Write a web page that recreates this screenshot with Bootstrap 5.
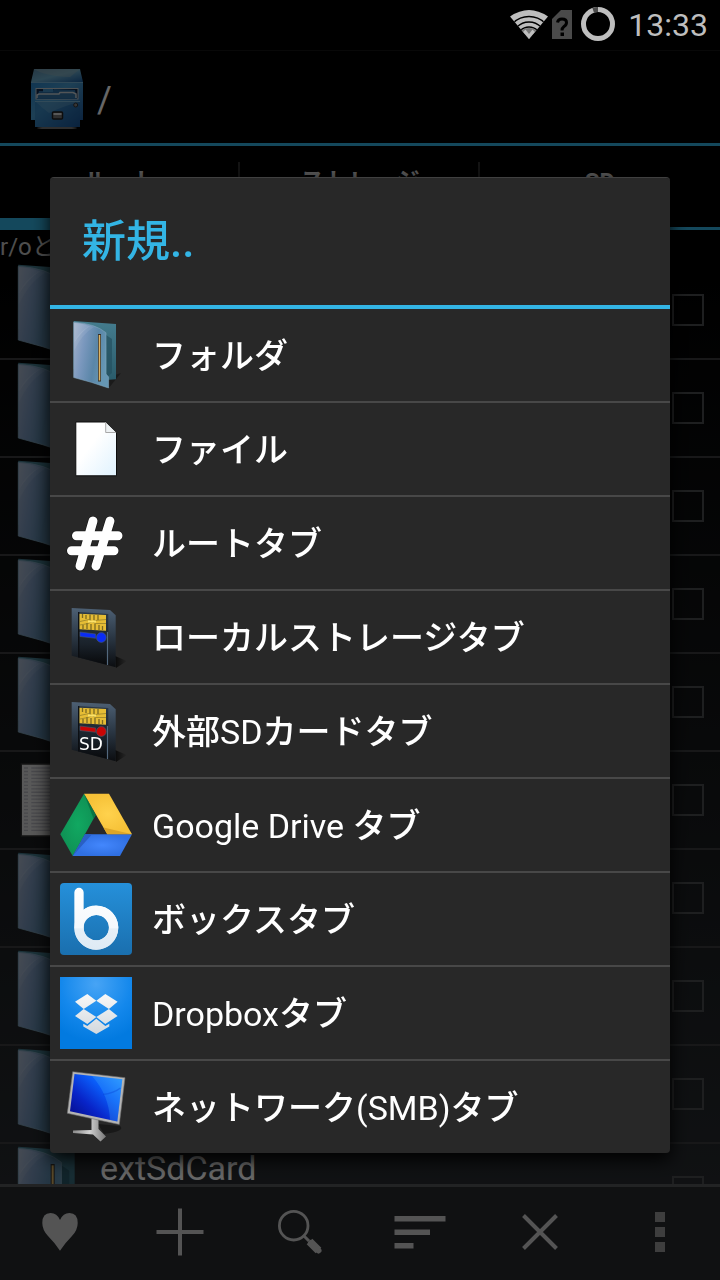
<!DOCTYPE html>
<html lang="ja">
<head>
  <meta charset="UTF-8" />
  <meta name="viewport" content="width=device-width, initial-scale=1.0"/>
  <title>File Manager</title>
  <link rel="stylesheet" href="https://cdn.jsdelivr.net/npm/bootstrap@5.3.0/dist/css/bootstrap.min.css"/>
  <style>
    body {
      font-family: Roboto, "Noto Sans CJK JP", sans-serif;
      background-color: #000;
      color: #fff;
    }
    .screen {
      background: linear-gradient(#000 0, #000 240px, #282c30 1180px);
    }
    .status-bar {
      z-index: 1060;
      height: 50px;
      padding-right: 12px;
      font-size: 32px;
      line-height: 48px;
      color: #bebebe;
    }
    .path-bar {
      height: 96px;
      padding-left: 25px;
      border-top: 1px solid #141414;
      border-bottom: 3px solid #33b5e5;
      font-size: 36px;
    }
    .path-bar span {
      padding-top: 6px;
    }
    .tab-strip {
      border-bottom: 3px solid #33b5e5;
    }
    .tab-strip a {
      height: 81px;
      line-height: 72px;
      font-size: 24px;
      font-weight: 700;
      color: #ddd;
      text-decoration: none;
      border-bottom: 9px solid transparent;
    }
    .tab-strip a.active {
      border-bottom-color: #33b5e5;
    }
    .tab-strip a:not(:last-child) {
      background: linear-gradient(#303030, #303030) right 16px / 2px 52px no-repeat;
    }
    .mount-info {
      height: 32px;
      line-height: 34px;
      font-size: 24px;
      color: #c4c4c4;
    }
    .file-row {
      height: 98px;
      border-bottom: 2px solid #3c3e40;
      padding-right: 16px;
    }
    .file-name {
      font-size: 34px;
      line-height: 48px;
    }
    .file-row .form-check-input {
      width: 32px;
      height: 32px;
      border: 2px solid #4c4e50;
      border-radius: 0;
      background-color: transparent;
    }
    .tool-bar {
      border-top: 3px solid #55585a;
      background-color: #282b2e;
    }
    .tool-bar button {
      height: 93px;
      color: #d2d2d2;
      border-radius: 0;
    }
    .tool-bar svg {
      display: block;
      margin: 0 auto 4px;
    }
    .modal-backdrop {
      --bs-backdrop-opacity: 0.6;
    }
    .new-dialog {
      padding-top: 50px;
    }
    .new-dialog .modal-dialog {
      max-width: none;
      min-height: 100%;
      margin: 0 50px;
    }
    .new-dialog .modal-content {
      background-color: #282828;
      color: #fff;
      border: 0;
      border-top: 1px solid #404040;
      border-radius: 4px;
      box-shadow: 0 6px 18px #000;
      overflow: hidden;
    }
    .new-dialog .modal-header {
      height: 131px;
      padding: 0 32px;
      border-bottom: 4px solid #33b5e5;
      border-radius: 0;
    }
    .new-dialog .modal-title {
      font-size: 44px;
      font-weight: 500;
      color: #33b5e5;
    }
    .new-dialog .list-group-item {
      height: 94px;
      padding: 2px 10px 0;
      gap: 20px;
      font-size: 34px;
      font-weight: 500;
      background-color: transparent;
      color: #fff;
      border-color: #484848;
      border-width: 0 0 2px;
    }
    .new-dialog .list-group-item svg {
      margin-bottom: 2px;
    }
    .new-dialog .list-group-item:last-child {
      height: 92px;
      border-bottom: 0;
    }
  </style>
</head>
<body>
  <!-- Shared icons -->
  <svg width="0" height="0" class="position-absolute" aria-hidden="true">
    <defs>
      <linearGradient id="folderFront" x1="0" y1="0" x2="1" y2="0.3">
        <stop offset="0" stop-color="#a3b2cb"/>
        <stop offset="0.35" stop-color="#7b98be"/>
        <stop offset="0.7" stop-color="#5a86a8"/>
        <stop offset="1" stop-color="#6697b4"/>
      </linearGradient>
      <linearGradient id="folderBack" x1="0" y1="0" x2="0" y2="1">
        <stop offset="0" stop-color="#447c8e"/>
        <stop offset="1" stop-color="#2a5c6b"/>
      </linearGradient>
      <linearGradient id="paper" x1="0" y1="0" x2="1" y2="1">
        <stop offset="0.4" stop-color="#fff"/>
        <stop offset="1" stop-color="#dff2fe"/>
      </linearGradient>
      <linearGradient id="cardBody" x1="0" y1="0" x2="0" y2="1">
        <stop offset="0" stop-color="#4d6074"/>
        <stop offset="0.5" stop-color="#2a3643"/>
        <stop offset="1" stop-color="#0b0d10"/>
      </linearGradient>
      <linearGradient id="cardPanel" x1="0" y1="0" x2="0" y2="1">
        <stop offset="0" stop-color="#2c3947"/>
        <stop offset="0.6" stop-color="#1a222b"/>
        <stop offset="1" stop-color="#08090b"/>
      </linearGradient>
      <linearGradient id="floorShade" x1="0" y1="0" x2="1" y2="0">
        <stop offset="0" stop-color="#000" stop-opacity="0.8"/>
        <stop offset="1" stop-color="#000" stop-opacity="0"/>
      </linearGradient>
      <linearGradient id="boxBlue" x1="0" y1="0" x2="0" y2="1">
        <stop offset="0" stop-color="#2590da"/>
        <stop offset="1" stop-color="#1a6fae"/>
      </linearGradient>
      <linearGradient id="boxLetter" gradientUnits="userSpaceOnUse" x1="0" y1="5" x2="0" y2="67">
        <stop offset="0" stop-color="#fff"/>
        <stop offset="0.64" stop-color="#f4f8fc"/>
        <stop offset="0.66" stop-color="#e6eff7"/>
        <stop offset="1" stop-color="#deeaf4"/>
      </linearGradient>
      <radialGradient id="dropBlue" cx="0.5" cy="0.1" r="0.8">
        <stop offset="0" stop-color="#47a4f5"/>
        <stop offset="0.6" stop-color="#1488ec"/>
        <stop offset="1" stop-color="#027ae0"/>
      </radialGradient>
      <linearGradient id="dropWhite" gradientUnits="userSpaceOnUse" x1="0" y1="17" x2="0" y2="57">
        <stop offset="0" stop-color="#f8f8f8"/>
        <stop offset="1" stop-color="#d2d8de"/>
      </linearGradient>
      <linearGradient id="screenBlue" x1="0" y1="1" x2="1" y2="0">
        <stop offset="0" stop-color="#05087e"/>
        <stop offset="0.35" stop-color="#0824c8"/>
        <stop offset="0.65" stop-color="#0a5cf8"/>
        <stop offset="1" stop-color="#2f9cff"/>
      </linearGradient>
      <linearGradient id="metal" x1="0" y1="0" x2="1" y2="0">
        <stop offset="0" stop-color="#8a8a8a"/>
        <stop offset="0.5" stop-color="#d0d0d0"/>
        <stop offset="1" stop-color="#777"/>
      </linearGradient>
      <radialGradient id="driveYellow"><stop offset="0" stop-color="#ffd24d"/><stop offset="1" stop-color="#f6c137"/></radialGradient>
      <radialGradient id="driveGreen"><stop offset="0" stop-color="#11a861"/><stop offset="1" stop-color="#0f9255"/></radialGradient>
      <radialGradient id="driveBlue"><stop offset="0" stop-color="#4387fd"/><stop offset="1" stop-color="#3070e2"/></radialGradient>
      <linearGradient id="cabinetTop" x1="0" y1="0" x2="1" y2="1">
        <stop offset="0" stop-color="#5d8aa8"/>
        <stop offset="0.5" stop-color="#6fb0cf"/>
        <stop offset="1" stop-color="#1a5fa5"/>
      </linearGradient>
      <linearGradient id="cabinetFront" x1="0" y1="0" x2="1" y2="1">
        <stop offset="0" stop-color="#2a86cc"/>
        <stop offset="0.4" stop-color="#4a9fd4"/>
        <stop offset="1" stop-color="#1a5298"/>
      </linearGradient>
      <clipPath id="wifiFan"><path d="M19 29 0 6.500Q19-6.500 38 6.500Z"/></clipPath>
      <symbol id="icon-folder" viewBox="0 0 72 72">
        <path d="M46 59 61 54 48 70Z" fill="#000" opacity="0.35"/>
        <path d="M13.700 2 56 5V60.300L46 61 13.700 50Z" fill="url(#folderBack)"/>
        <path d="M46 16 52 20V54L47 58Z" fill="#235060" opacity="0.7"/>
        <path d="M13.700 3.200Q35 4.500 46 13.700V55L48.600 58V69Q32 63 13.700 58.500Z" fill="url(#folderFront)" stroke="#7fa4bb" stroke-width="0.600"/>
        <path d="M14 24V4Q23 4.500 30 7Q21 13 14 24Z" fill="#fff" opacity="0.12"/>
        <path d="M14 32Q22 15 34 8L30 6.500Q18 13 14 24Z" fill="#fff" opacity="0.08"/>
        <path d="M39.500 15V62.500" stroke="#33302c" stroke-width="3"/>
        <path d="M39.500 16V61.500" stroke="#dcb465" stroke-width="1.500"/>
      </symbol>
      <symbol id="icon-file" viewBox="0 0 72 72">
        <path d="M15.800 9H45.700L56.500 19.700V62.800H15.800Z" fill="url(#paper)" stroke="#0c0c0c" stroke-width="1"/>
        <path d="M45.700 9.500V19.500H56" fill="#eef2f4" stroke="#a8a8a8" stroke-width="1"/>
      </symbol>
      <symbol id="icon-text" viewBox="0 0 72 72">
        <path d="M16 9H56V63H16Z" fill="#dcdcdc" stroke="#333" stroke-width="1"/>
        <path d="M19.500 11.500V61" stroke="#b4b4bc" stroke-width="3" stroke-dasharray="1 1.600"/>
        <path d="M38 11.500V61" stroke="#b4b4bc" stroke-width="29" stroke-dasharray="1 1.600"/>
      </symbol>
      <symbol id="icon-card" viewBox="0 0 72 72">
        <path d="M55 55 67 60 56 67Z" fill="url(#floorShade)"/>
        <path d="M11.700 7 50 9 55.700 14.300V66.300L11.700 54.700Z" fill="url(#cardBody)"/>
        <path d="M18.700 11 48.300 13V64L18.700 56.500Z" fill="url(#cardPanel)"/>
        <path d="M18.700 11V56.500" stroke="#0a0d10" stroke-width="1.200"/>
        <path d="M47.500 31V64" stroke="#53687d" stroke-width="1.200"/>
        <path d="M19.500 12.700 46 14V29.700L19.500 28.300Z" fill="#e6bd35"/>
        <path d="M22.500 13V17M26 14V18M30 13.500V19M34 14V19M38 14V19M23 24V28M27 22V28M31 23V29M35 23V29M39 24V29M42.500 25V29" stroke="#7c6a22" stroke-width="1.300"/>
        <path d="M20 20.500 29 18.500 35 22.500H46M20 24 28 22.500 35 19.500 46 18.500" fill="none" stroke="#8b7828" stroke-width="0.700"/>
        <path d="M28 20.500H36" stroke="#fbe26a" stroke-width="2"/>
      </symbol>
    </defs>
  </svg>

  <div class="screen vh-100 d-flex flex-column overflow-hidden">
    <div class="status-bar bg-black position-relative d-flex align-items-center justify-content-end flex-shrink-0">
      <svg width="38" height="30" viewBox="0 0 38 30" class="me-1" aria-hidden="true">
        <g clip-path="url(#wifiFan)">
          <rect width="38" height="30" fill="#bebebe"/>
          <circle cx="19" cy="29" r="11" fill="#777"/>
          <g fill="none" stroke="#000" stroke-width="1.300">
            <circle cx="19" cy="29" r="22.500"/>
            <circle cx="19" cy="29" r="17"/>
            <circle cx="19" cy="29" r="12"/>
          </g>
          <path d="M13 22 19 29 25 22 22.500 19.500 19 24 15.500 19.500Z" fill="#bebebe"/>
        </g>
      </svg>
      <svg width="20" height="30" viewBox="0 0 20 30" aria-hidden="true">
        <path d="M9 0H20V29H0V9Z" fill="#4a4a4a"/>
        <path d="M5.500 12.500Q6 9 10 9Q14.500 9 14.500 12.500Q14.500 15 12 16.500Q10 18 10 20.500" fill="none" stroke="#000" stroke-width="3"/>
        <rect x="8.500" y="22.500" width="3.500" height="3.500" fill="#000"/>
      </svg>
      <svg width="36" height="36" viewBox="0 0 36 36" class="ms-2" aria-hidden="true">
        <circle cx="18" cy="17" r="14.500" fill="none" stroke="#bebebe" stroke-width="5"/>
        <path d="M13.200 3.300A14.500 14.500 0 0 1 18 2.500" fill="none" stroke="#4a4a4a" stroke-width="5"/>
      </svg>
      <span class="ms-2 ps-1">13:33</span>
    </div>

    <header class="path-bar d-flex align-items-center gap-2 flex-shrink-0">
      <svg width="64" height="64" viewBox="0 0 64 64" aria-hidden="true">
        <ellipse cx="32" cy="63" rx="20" ry="1.500" fill="#777"/>
        <path d="M6 17H58V55H55V62H10V55H6Z" fill="url(#cabinetFront)"/>
        <path d="M9 4H55L58 17H6Z" fill="url(#cabinetTop)"/>
        <path d="M9 4H55L45 12Q20 11 9 4Z" fill="#9ab5bd" opacity="0.45"/>
        <path d="M6 17.500H58" stroke="#75b5da"/>
        <rect x="11" y="23.500" width="42" height="10.500" fill="#10294d" stroke="#c4ccd2"/>
        <path d="M12 34 14 26H27L29 24 50 25 52 34Z" fill="#2b6fa6"/>
        <path d="M12 33V30L14 29H34L35 27.500H48L51 29V33" fill="#3575a8" stroke="#ccd5da" stroke-width="1.500"/>
        <path d="M18 24H28V27H18Z" fill="#4292c9"/>
        <path d="M10 36H55V62H10Z" fill="#15599d" opacity="0.25"/>
        <path d="M10 36.500H55" stroke="#7bb8dc"/>
        <path d="M11 37H54Q36 42 24 48Q16 42 11 37Z" fill="#88c1dc" opacity="0.3"/>
        <circle cx="50.700" cy="40" r="2" fill="#888" stroke="#333"/>
        <rect x="27.500" y="47" width="10" height="7" rx="1" fill="#777" stroke="#222" stroke-width="1.500"/>
        <path d="M28.500 49H36.500" stroke="#ddd" stroke-width="2"/>
      </svg>
      <span>/</span>
    </header>

    <nav class="tab-strip d-flex flex-shrink-0 text-center">
      <a href="#" class="active col-4">ルート</a>
      <a href="#" class="col-4">ストレージ</a>
      <a href="#" class="col-4">SD</a>
    </nav>

    <div class="mount-info flex-shrink-0">r/oと</div>

    <main class="flex-grow-1 overflow-hidden" id="fileList"></main>

    <footer class="tool-bar d-flex flex-shrink-0">
      <button type="button" class="btn col-2 p-0" aria-label="Favorites">
        <svg width="60" height="60" viewBox="0 0 60 60" fill="currentColor">
          <path d="M30 48.700Q25 41 18 34Q12.300 28 12.300 21Q12.300 11 20.500 11Q27 11 30 18Q33 11 39.500 11Q47.700 11 47.700 21Q47.700 28 42 34Q35 41 30 48.700Z"/>
        </svg>
      </button>
      <button type="button" class="btn col-2 p-0" aria-label="New">
        <svg width="60" height="60" viewBox="0 0 60 60" stroke="currentColor" stroke-width="4">
          <path d="M30 6.500V53.500M6.500 30H53.500"/>
        </svg>
      </button>
      <button type="button" class="btn col-2 p-0" aria-label="Search">
        <svg width="60" height="60" viewBox="0 0 60 60" fill="none" stroke="currentColor">
          <circle cx="23.700" cy="23.700" r="14.300" stroke-width="2.800"/>
          <path d="M33.500 33.500 39 39" stroke-width="3"/>
          <path d="M39.500 39.500 48.500 48.500" stroke-width="8"/>
          <path d="M41 41 48.500 48.500" stroke-width="6" stroke-linecap="round"/>
        </svg>
      </button>
      <button type="button" class="btn col-2 p-0" aria-label="Sort">
        <svg width="60" height="60" viewBox="0 0 60 60" fill="currentColor">
          <path d="M4.500 14H55.500V19.500H4.500ZM4.500 27.500H40V33H4.500ZM4.500 41H23.500V46.500H4.500Z"/>
        </svg>
      </button>
      <button type="button" class="btn col-2 p-0" aria-label="Close">
        <svg width="60" height="60" viewBox="0 0 60 60" stroke="currentColor" stroke-width="4">
          <path d="M13.500 13.500 46.500 46.500M46.500 13.500 13.500 46.500"/>
        </svg>
      </button>
      <button type="button" class="btn col-2 p-0" aria-label="More">
        <svg width="60" height="60" viewBox="0 0 60 60" fill="#9c9c9c">
          <path d="M25 10H35V20H25ZM25 25H35V35H25ZM25 40H35V50H25Z"/>
        </svg>
      </button>
    </footer>
  </div>

  <div class="modal-backdrop show"></div>

  <!-- New item dialog -->
  <div class="modal new-dialog d-block" tabindex="-1" role="dialog" aria-labelledby="newDialogTitle">
    <div class="modal-dialog modal-dialog-centered">
      <div class="modal-content">
        <div class="modal-header">
          <h1 class="modal-title" id="newDialogTitle">新規..</h1>
        </div>
        <div class="list-group list-group-flush">
          <button type="button" class="list-group-item list-group-item-action d-flex align-items-center">
            <svg width="72" height="72" class="flex-shrink-0"><use href="#icon-folder"/></svg>
            <span>フォルダ</span>
          </button>
          <button type="button" class="list-group-item list-group-item-action d-flex align-items-center">
            <svg width="72" height="72" class="flex-shrink-0"><use href="#icon-file"/></svg>
            <span>ファイル</span>
          </button>
          <button type="button" class="list-group-item list-group-item-action d-flex align-items-center">
            <svg width="72" height="72" viewBox="0 0 72 72" class="flex-shrink-0" fill="none" stroke-linecap="round">
              <path d="M33 14 20 59M50 14 36 59M16.500 28.700H58M11.500 43.700H54" stroke="#111" stroke-width="10"/>
              <path d="M33 14 20 59M50 14 36 59M16.500 28.700H58M11.500 43.700H54" stroke="#fff" stroke-width="9"/>
            </svg>
            <span>ルートタブ</span>
          </button>
          <button type="button" class="list-group-item list-group-item-action d-flex align-items-center">
            <svg width="72" height="72" viewBox="0 0 72 72" class="flex-shrink-0">
              <use href="#icon-card"/>
              <g fill="#0a2cf5" stroke="#4a5a6e" stroke-width="0.600">
                <path d="M20 31 35.700 33V37.300L20 35.500Z"/>
                <circle cx="41.300" cy="36.500" r="4.900"/>
              </g>
            </svg>
            <span>ローカルストレージタブ</span>
          </button>
          <button type="button" class="list-group-item list-group-item-action d-flex align-items-center">
            <svg width="72" height="72" viewBox="0 0 72 72" class="flex-shrink-0">
              <use href="#icon-card"/>
              <g fill="#c80505" stroke="#4a5a6e" stroke-width="0.600">
                <path d="M20 31 35.700 33V37.300L20 35.500Z"/>
                <circle cx="41.300" cy="36.500" r="4.900"/>
              </g>
              <text x="19" y="55" font-family="DejaVu Sans" font-size="17" font-weight="400" fill="#fff">SD</text>
            </svg>
            <span>外部<span class="fw-normal">SD</span>カードタブ</span>
          </button>
          <button type="button" class="list-group-item list-group-item-action d-flex align-items-center">
            <svg width="72" height="72" viewBox="0 0 72 72" class="flex-shrink-0">
              <path d="M24 4.700 35.700 26 12.700 67 0.300 45.300Z" fill="url(#driveGreen)"/>
              <path d="M24 4.700H49L72 45.300H47.300Z" fill="url(#driveYellow)"/>
              <path d="M25 45.300H72L60 67H12.700Z" fill="url(#driveBlue)"/>
              <path d="M24 4.700 35.700 26 33.500 29.500Z" fill="#0a7544"/>
              <path d="M72 45.300H47.300L43.500 38.500Z" fill="#dca528"/>
              <path d="M25 45.300H32L12.700 67Z" fill="#2a5fc4"/>
            </svg>
            <span><span class="fw-normal">Google Drive </span>タブ</span>
          </button>
          <button type="button" class="list-group-item list-group-item-action d-flex align-items-center">
            <svg width="72" height="72" viewBox="0 0 72 72" class="flex-shrink-0">
              <rect width="72" height="72" rx="4" fill="url(#boxBlue)"/>
              <g fill="none" stroke="url(#boxLetter)" stroke-width="9.300">
                <path d="M19 9.500V44.700A17.300 17.300 0 1 0 25 31.500" stroke-linecap="round"/>
                <circle cx="36.300" cy="44.700" r="17.300"/>
              </g>
            </svg>
            <span>ボックスタブ</span>
          </button>
          <button type="button" class="list-group-item list-group-item-action d-flex align-items-center">
            <svg width="72" height="72" viewBox="0 0 72 72" class="flex-shrink-0">
              <rect width="72" height="72" fill="url(#dropBlue)"/>
              <g fill="url(#dropWhite)">
                <path d="M15 24.700 27.300 17 36.300 23.700 23.700 32Z"/>
                <path d="M57.600 24.700 45.300 17 36.300 23.700 48.900 32Z"/>
                <path d="M15 39 23.700 32 36.300 40 27.300 47Z"/>
                <path d="M57.600 39 48.900 32 36.300 40 45.300 47Z"/>
                <path d="M23.300 46.800 27.300 49 36.300 41.700 45.300 49 49.300 46.800V49.500L36.300 57 23.300 49.500Z"/>
              </g>
            </svg>
            <span><span class="fw-normal">Dropbox</span>タブ</span>
          </button>
          <button type="button" class="list-group-item list-group-item-action d-flex align-items-center">
            <svg width="72" height="72" viewBox="0 0 72 72" class="flex-shrink-0">
              <path d="M38 53 60 55Q66 60 44 63Z" fill="#000" opacity="0.4"/>
              <path d="M31.500 46H38.500V58L46 65.500 40.500 70.500 33 63.500 13 62V59.500L31.500 59Z" fill="url(#metal)"/>
              <path d="M12.700 0.700 65 6.700 59.300 53.500 7.300 42.300Z" fill="#b4b4b4" stroke="#6e6e6e" stroke-width="0.600"/>
              <path d="M14.500 3 62.300 8.300 57.300 50.500 10 40.300Z" fill="url(#screenBlue)"/>
              <path d="M32 5 62.300 8.300 57.300 50.500 50 49Q49 24 32 5Z" fill="#3fb0ff" opacity="0.28"/>
              <path d="M43 23.500Q54 22 60.500 17" stroke="#0747d8" stroke-width="1.500" fill="none" opacity="0.4"/>
            </svg>
            <span>ネットワーク<span class="fw-normal">(SMB)</span>タブ</span>
          </button>
        </div>
      </div>
    </div>
  </div>

  <script>
    const files = [
      { icon: 'folder' },
      { icon: 'folder' },
      { icon: 'folder' },
      { icon: 'folder' },
      { icon: 'folder' },
      { icon: 'text' },
      { icon: 'folder' },
      { icon: 'folder' },
      { icon: 'folder' },
      { icon: 'folder', name: 'extSdCard' }
    ];

    function renderFileRows() {
      const fileList = document.getElementById('fileList');

      files.forEach((file, index) => {
        const row = document.createElement('div');
        row.className = 'file-row d-flex align-items-center';
        row.innerHTML = `
          <svg width="96" height="96" class="flex-shrink-0"><use href="#icon-${file.icon}"/></svg>
          <label class="file-name align-self-start flex-grow-1 ps-1" for="file${index}">${file.name || ''}</label>
          <input class="form-check-input m-0" type="checkbox" id="file${index}" aria-label="Select">
        `;
        fileList.appendChild(row);
      });
    }

    renderFileRows();
  </script>

  <script src="https://cdn.jsdelivr.net/npm/bootstrap@5.3.0/dist/js/bootstrap.bundle.min.js"></script>
</body>
</html>
